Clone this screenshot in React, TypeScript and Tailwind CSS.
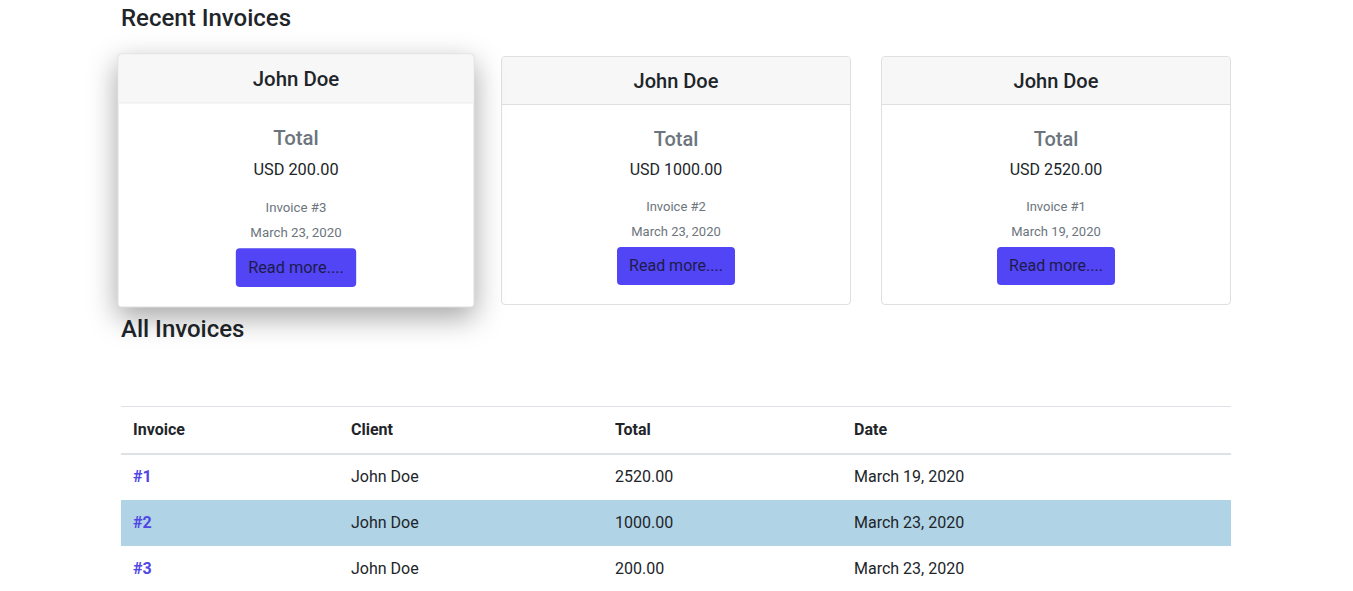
const invoices = [
  { id: 3, client: "John Doe", total: "200.00", date: "March 23, 2020" },
  { id: 2, client: "John Doe", total: "1000.00", date: "March 23, 2020" },
  { id: 1, client: "John Doe", total: "2520.00", date: "March 19, 2020" },
]

function InvoiceCard({ inv, hovered }: { inv: (typeof invoices)[0]; hovered?: boolean }) {
  return (
    <div
      className={
        hovered
          ? "bg-white border border-[#dfdfdf] rounded-[4px] scale-[1.02] shadow-[0_10px_28px_rgba(0,0,0,0.35)]"
          : "bg-white border border-[#dfdfdf] rounded-[4px]"
      }
    >
      <div className="h-12 flex items-center justify-center bg-[#f7f7f7] border-b border-[#dfdfdf] rounded-t-[4px]">
        <span className="text-[20px] font-medium text-[#212529]">{inv.client}</span>
      </div>
      <div className="flex flex-col items-center pt-[22px] pb-[19px]">
        <div className="text-[20px] leading-6 font-medium text-[#6c757d]">Total</div>
        <div className="mt-[7px] text-base leading-6 text-[#212529]">USD {inv.total}</div>
        <div className="mt-[15px] text-[13px] leading-5 text-[#6c757d]">Invoice #{inv.id}</div>
        <div className="mt-[5px] text-[13px] leading-5 text-[#6c757d]">{inv.date}</div>
        <button className="mt-[5px] h-[38px] px-3 rounded-[4px] bg-[#5145f5] text-base text-[#1e1b4b]">
          Read more....
        </button>
      </div>
    </div>
  )
}

export default function App() {
  const rows = [...invoices].reverse()
  return (
    <div className="bg-white min-h-screen font-['Roboto',sans-serif] text-[#212529]">
      <div className="w-[1110px] ml-[121px] pt-[4px]">
        <h3 className="text-2xl leading-[29px] font-medium">Recent Invoices</h3>
        <div className="grid grid-cols-3 gap-[30px] mt-[23px]">
          {invoices.map((inv, i) => (
            <InvoiceCard key={inv.id} inv={inv} hovered={i === 0} />
          ))}
        </div>
        <h3 className="mt-[10px] text-2xl leading-[29px] font-medium">All Invoices</h3>
        <table className="w-full mt-[62px] border-t border-[#dee2e6] text-base">
          <thead>
            <tr className="h-[47px] border-b-2 border-[#dee2e6]">
              <th className="w-[218px] px-3 text-left font-bold">Invoice</th>
              <th className="w-[264px] px-3 text-left font-bold">Client</th>
              <th className="w-[239px] px-3 text-left font-bold">Total</th>
              <th className="px-3 text-left font-bold">Date</th>
            </tr>
          </thead>
          <tbody>
            {rows.map((r) => (
              <tr key={r.id} className={r.id === 2 ? "h-[46px] bg-[#b0d4e6]" : "h-[46px]"}>
                <td className="px-3">
                  <a className="font-bold text-[#4f46e5]">#{r.id}</a>
                </td>
                <td className="px-3">{r.client}</td>
                <td className="px-3">{r.total}</td>
                <td className="px-3">{r.date}</td>
              </tr>
            ))}
          </tbody>
        </table>
      </div>
    </div>
  )
}
